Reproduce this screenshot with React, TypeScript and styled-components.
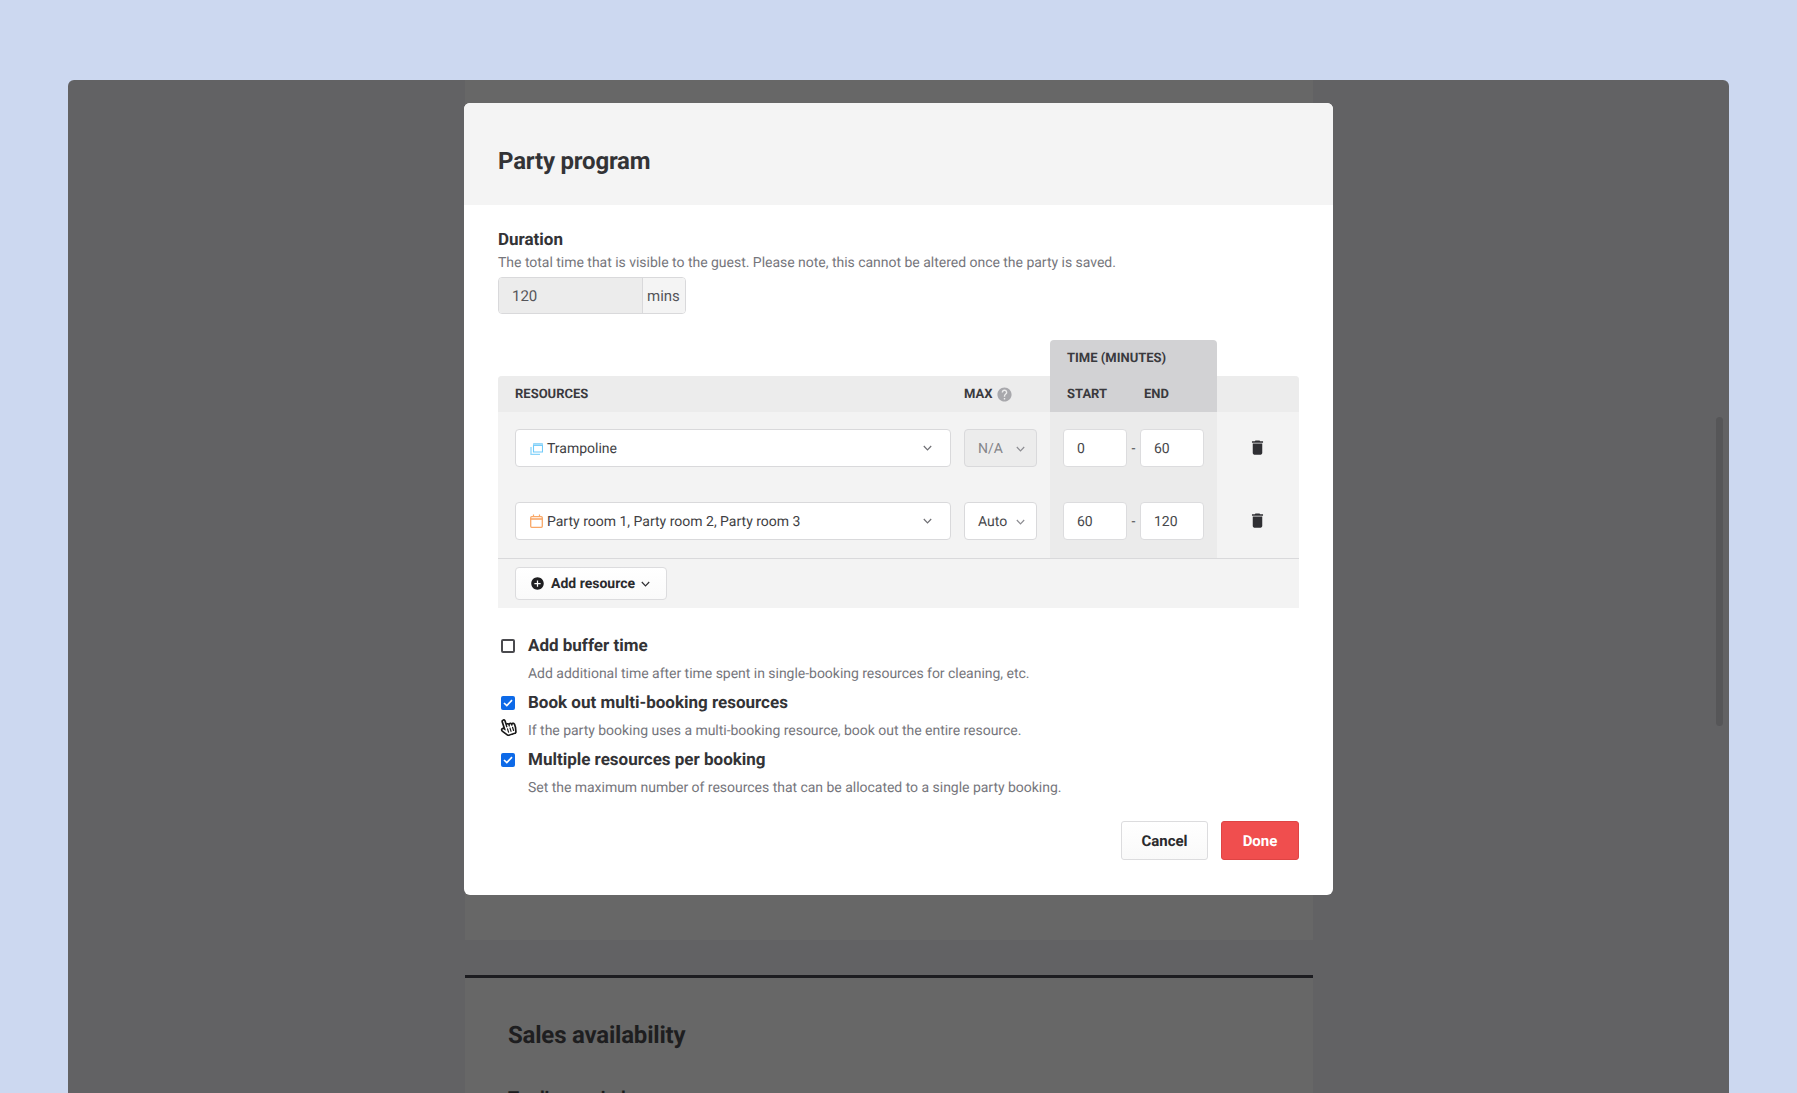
import React from "react";
import styled, { createGlobalStyle } from "styled-components";
import { MdAddCircle, MdDelete, MdHelp } from "react-icons/md";
import { FaRegHandPointer } from "react-icons/fa";

const GlobalStyle = createGlobalStyle`
  html, body {
    margin: 0;
    height: 100%;
    overflow: hidden;
    background: #ccd8f0;
  }
  * {
    box-sizing: border-box;
  }
`;

const Chevron = ({ color = "#6f6f74" }: { color?: string }) => (
  <svg width="9" height="6" viewBox="0 0 9 6" fill="none">
    <path d="M0.8 1 L4.5 4.8 L8.2 1" stroke={color} strokeWidth="1.2" />
  </svg>
);

const TrampolineIcon = () => (
  <svg width="13" height="13" viewBox="0 0 13 13" fill="none" stroke="#6fcaf9">
    <path d="M3.5 3.5 H12.5 V10 H3.5 Z" strokeWidth="1.1" />
    <path d="M3.5 1.5 H12.5 V3.5 H3.5 Z" fill="#a9def9" strokeWidth="0.6" />
    <path d="M1 5 V12.4 H10" strokeWidth="1.3" opacity="0.8" />
  </svg>
);

const CalendarIcon = () => (
  <svg width="13" height="14" viewBox="0 0 13 14" fill="none" stroke="#f9a868">
    <rect x="0.7" y="2.7" width="11.6" height="10.6" rx="1" strokeWidth="1.3" />
    <path d="M0.7 5 H12.3" strokeWidth="1.6" />
    <path d="M3.5 0.5 V3 M9.5 0.5 V3" strokeWidth="1.2" />
  </svg>
);

const CheckMark = () => (
  <svg width="10" height="8" viewBox="0 0 10 8" fill="none">
    <path d="M1 4 L3.8 6.6 L9 1.2" stroke="#fff" strokeWidth="1.7" />
  </svg>
);

const rows = [
  {
    icon: <TrampolineIcon />,
    name: "Trampoline",
    max: "N/A",
    disabled: true,
    start: "0",
    end: "60",
  },
  {
    icon: <CalendarIcon />,
    name: "Party room 1, Party room 2, Party room 3",
    max: "Auto",
    disabled: false,
    start: "60",
    end: "120",
  },
];

const options = [
  {
    label: "Add buffer time",
    help: "Add additional time after time spent in single-booking resources for cleaning, etc.",
    checked: false,
  },
  {
    label: "Book out multi-booking resources",
    help: "If the party booking uses a multi-booking resource, book out the entire resource.",
    checked: true,
  },
  {
    label: "Multiple resources per booking",
    help: "Set the maximum number of resources that can be allocated to a single party booking.",
    checked: true,
  },
];

export default function App() {
  return (
    <>
      <GlobalStyle />
      <Window>
        <PageColumn>
          <PageUpper />
          <PageLower>
            <SalesTitle>Sales availability</SalesTitle>
            <SalesLabel>Trading period</SalesLabel>
          </PageLower>
        </PageColumn>
        <Scrollbar />
        <Modal>
          <ModalHeader>
            <ModalTitle>Party program</ModalTitle>
          </ModalHeader>
          <ModalBody>
            <SectionTitle>Duration</SectionTitle>
            <HelpText>
              The total time that is visible to the guest. Please note, this
              cannot be altered once the party is saved.
            </HelpText>
            <DurationField>
              <DurationValue>120</DurationValue>
              <DurationUnit>mins</DurationUnit>
            </DurationField>

            <Table>
              <HeadRow>
                <ResourcesHead>RESOURCES</ResourcesHead>
                <MaxHead>
                  MAX
                  <MdHelp size={17} color="#a8a8ac" />
                </MaxHead>
                <TimeHead>
                  <TimeCaption>TIME (MINUTES)</TimeCaption>
                  <TimeLabels>
                    <StartLabel>START</StartLabel>
                    <span>END</span>
                  </TimeLabels>
                </TimeHead>
              </HeadRow>
              <TableRows>
                {rows.map((row) => (
                  <ResourceRow key={row.name}>
                    <ResourceSelect>
                      <ResourceName>
                        {row.icon}
                        <span>{row.name}</span>
                      </ResourceName>
                      <Chevron />
                    </ResourceSelect>
                    <MaxSelect $disabled={row.disabled}>
                      {row.max}
                      <Chevron color="#8d8d92" />
                    </MaxSelect>
                    <TimeCell>
                      <TimeInput>{row.start}</TimeInput>
                      <Dash>-</Dash>
                      <TimeInput>{row.end}</TimeInput>
                    </TimeCell>
                    <TrashCell>
                      <MdDelete size={19} color="#2f2f33" />
                    </TrashCell>
                  </ResourceRow>
                ))}
              </TableRows>
              <TableFooter>
                <AddButton>
                  <MdAddCircle size={15} color="#1e1e20" />
                  Add resource
                  <Chevron color="#2f2f33" />
                </AddButton>
              </TableFooter>
            </Table>

            <OptionList>
              {options.map((option) => (
                <Option key={option.label}>
                  <Checkbox $checked={option.checked}>
                    {option.checked && <CheckMark />}
                  </Checkbox>
                  <OptionLabel>{option.label}</OptionLabel>
                  <OptionHelp>{option.help}</OptionHelp>
                </Option>
              ))}
            </OptionList>

            <Actions>
              <CancelButton>Cancel</CancelButton>
              <DoneButton>Done</DoneButton>
            </Actions>
          </ModalBody>
          <Pointer>
            <FaRegHandPointer size={18} color="#1a1a1a" />
          </Pointer>
        </Modal>
      </Window>
    </>
  );
}

const Window = styled.div`
  position: relative;
  height: 1013px;
  margin: 80px 68px 0;
  border-radius: 6px 6px 0 0;
  background: #626264;
  overflow: hidden;
  font-family: Roboto, "Liberation Sans", sans-serif;
  text-rendering: geometricPrecision;
`;
const PageColumn = styled.div`
  width: 848px;
  margin-left: 397px;
`;
const PageUpper = styled.div`
  height: 860px;
  background: #676767;
`;
const PageLower = styled.div`
  margin-top: 35px;
  height: 200px;
  padding: 41px 43px;
  border-top: 3px solid #1c1c20;
  background: #676767;
`;
const SalesTitle = styled.h2`
  margin: 0;
  font-size: 24px;
  line-height: 32px;
  font-weight: 700;
  letter-spacing: -0.2px;
  color: #1e1e20;
`;
const SalesLabel = styled.div`
  margin-top: 37px;
  font-size: 18px;
  line-height: 22px;
  font-weight: 700;
  color: #1e1e20;
`;
const Scrollbar = styled.div`
  position: absolute;
  top: 337px;
  right: 6px;
  width: 7px;
  height: 309px;
  border-radius: 4px;
  background: #565658;
`;
const Modal = styled.div`
  position: absolute;
  top: 23px;
  left: 396px;
  width: 869px;
  height: 792px;
  border-radius: 6px;
  background: #fff;
  overflow: hidden;
  color: #333336;
`;
const ModalHeader = styled.div`
  height: 102px;
  padding: 42px 34px 0;
  background: #f4f4f4;
`;
const ModalTitle = styled.h1`
  margin: 0;
  font-size: 24px;
  line-height: 32px;
  font-weight: 700;
  letter-spacing: -0.2px;
  color: #333336;
`;
const ModalBody = styled.div`
  padding: 25px 34px 0;
`;
const SectionTitle = styled.div`
  font-size: 17px;
  line-height: 20px;
  font-weight: 700;
`;
const HelpText = styled.div`
  margin-top: 3px;
  font-size: 14px;
  line-height: 20px;
  letter-spacing: -0.02px;
  color: #76767c;
`;
const DurationField = styled.div`
  display: flex;
  width: 188px;
  height: 37px;
  margin-top: 4px;
  border: 1px solid #d9d9db;
  border-radius: 4px;
  font-size: 15px;
  color: #55555a;
  overflow: hidden;
`;
const DurationValue = styled.div`
  display: flex;
  align-items: center;
  width: 144px;
  padding-left: 13px;
  background: #ececec;
  border-right: 1px solid #d9d9db;
`;
const DurationUnit = styled.div`
  display: flex;
  align-items: center;
  padding-left: 4px;
  background: #f4f4f4;
  flex: 1;
`;
const Table = styled.div`
  margin-top: 62px;
  width: 801px;
  border-radius: 4px 4px 0 0;
  background: #f3f3f3;
  font-size: 14px;
`;
const HeadRow = styled.div`
  display: flex;
  height: 36px;
  border-radius: 4px 4px 0 0;
  background: #ececec;
  font-size: 13px;
  font-weight: 700;
  color: #3a3a3e;
`;
const ResourcesHead = styled.div`
  width: 466px;
  padding-left: 17px;
  line-height: 37px;
`;
const MaxHead = styled.div`
  display: flex;
  align-items: center;
  gap: 4px;
  width: 86px;
`;
const TimeHead = styled.div`
  position: relative;
  width: 167px;
  padding-left: 17px;
  background: #d2d2d4;
  line-height: 37px;
`;
const TimeCaption = styled.div`
  position: absolute;
  left: 0;
  right: 0;
  bottom: 36px;
  height: 36px;
  padding-left: 17px;
  border-radius: 4px 4px 0 0;
  background: #d2d2d4;
`;
const TimeLabels = styled.div`
  display: flex;
`;
const StartLabel = styled.span`
  width: 77px;
`;
const TableRows = styled.div`
  display: flex;
  flex-direction: column;
`;
const ResourceRow = styled.div`
  display: flex;
  align-items: stretch;
  height: 73px;
`;
const selectBox = `
  display: flex;
  align-items: center;
  justify-content: space-between;
  height: 38px;
  margin-top: 17px;
  border: 1px solid #d9d9db;
  border-radius: 4px;
`;
const ResourceSelect = styled.div`
  ${selectBox}
  width: 436px;
  margin-left: 17px;
  padding: 0 18px 0 14px;
  background: #fff;
  color: #3f3f44;
`;
const ResourceName = styled.div`
  display: flex;
  align-items: center;
  gap: 4px;
  span {
    padding-top: 2px;
  }
`;
const MaxSelect = styled.div<{ $disabled: boolean }>`
  ${selectBox}
  width: 73px;
  margin-left: 13px;
  padding: 2px 11px 0 13px;
  background: ${(p) => (p.$disabled ? "#ececec" : "#fff")};
  color: ${(p) => (p.$disabled ? "#85858a" : "#48484c")};
`;
const TimeCell = styled.div`
  display: flex;
  width: 167px;
  margin-left: 13px;
  padding: 17px 13px 0;
  background: #ebebeb;
  color: #48484c;
`;
const TimeInput = styled.div`
  display: flex;
  align-items: center;
  width: 64px;
  height: 38px;
  padding: 2px 0 0 13px;
  border: 1px solid #dcdcde;
  border-radius: 4px;
  background: #fff;
`;
const Dash = styled.div`
  width: 13px;
  line-height: 40px;
  text-align: center;
`;
const TrashCell = styled.div`
  display: flex;
  justify-content: center;
  flex: 1;
  padding-top: 26px;
  padding-right: 2px;
`;
const TableFooter = styled.div`
  height: 50px;
  padding: 8px 17px 0;
  border-top: 1px solid #d9d9db;
`;
const AddButton = styled.div`
  display: flex;
  align-items: center;
  gap: 6px;
  width: 152px;
  height: 33px;
  padding-left: 14px;
  border: 1px solid #dcdcde;
  border-radius: 4px;
  background: linear-gradient(#ffffff, #fafafa);
  font-weight: 700;
  color: #2a2a2d;
`;
const OptionList = styled.div`
  margin-top: 24px;
`;
const Option = styled.div`
  display: grid;
  grid-template-columns: 30px 1fr;
  grid-template-rows: 28px 29px;
  align-items: center;
`;
const Checkbox = styled.div<{ $checked: boolean }>`
  display: flex;
  align-items: center;
  justify-content: center;
  width: 14px;
  height: 14px;
  margin-left: 3px;
  border-radius: 2px;
  border: ${(p) => (p.$checked ? "none" : "2px solid #4a4a4e")};
  background: ${(p) => (p.$checked ? "#0d6ae8" : "#fff")};
`;
const OptionLabel = styled.div`
  font-size: 17px;
  font-weight: 700;
  color: #333336;
`;
const OptionHelp = styled.div`
  grid-column: 2;
  margin-top: -2px;
  font-size: 14px;
  letter-spacing: -0.025px;
  color: #76767c;
`;
const Actions = styled.div`
  display: flex;
  justify-content: flex-end;
  gap: 13px;
  margin-top: 18px;
`;
const buttonBase = `
  display: flex;
  align-items: center;
  justify-content: center;
  height: 39px;
  border-radius: 3px;
  font-size: 15px;
  font-weight: 700;
`;
const CancelButton = styled.div`
  ${buttonBase}
  width: 87px;
  border: 1px solid #dcdcde;
  background: linear-gradient(#ffffff, #f9f9f9);
  color: #2a2a2d;
`;
const DoneButton = styled.div`
  ${buttonBase}
  width: 78px;
  border: 1px solid #de4444;
  background: #f04e4e;
  color: #fff;
`;
const Pointer = styled.div`
  position: absolute;
  top: 615px;
  left: 35px;
  display: flex;
  transform: rotate(-18deg);
`;
